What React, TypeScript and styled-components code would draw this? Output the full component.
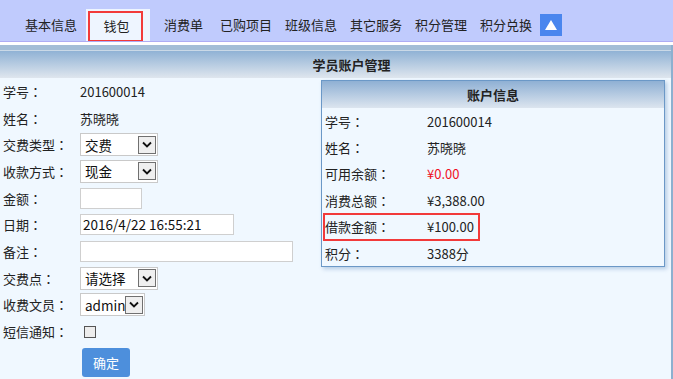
import React from 'react';
import styled, { createGlobalStyle } from 'styled-components';

const GlobalStyle = createGlobalStyle`
  body {
    margin: 0;
    background: #ffffff;
    font-family: "Noto Sans CJK SC", "Noto Sans", sans-serif;
    font-size: 13px;
    color: #222;
  }
`;

const Page = styled.div`
  width: 673px;
  height: 379px;
  overflow: hidden;
`;

const NavBar = styled.div`
  height: 41px;
  background: #c0cbfd;
  border-bottom: 1px solid #aeacf4;
  display: flex;
  align-items: flex-end;
  padding-left: 25px;
`;

const NavItem = styled.div<{ $gap?: number }>`
  height: 32px;
  line-height: 32px;
  margin-right: ${p => (p.$gap ?? 13)}px;
  white-space: nowrap;
  color: #222;
`;

const ActiveTab = styled.div`
  height: 32px;
  background: #eef5ff;
  padding: 0 7px 0 2px;
  margin: 0 14px 0 -4px;
  display: flex;
  align-items: flex-end;
`;

const ActiveInner = styled.div`
  width: 55px;
  height: 30px;
  box-sizing: border-box;
  border: 2px solid #f23a3a;
  border-bottom-width: 1px;
  text-align: center;
  line-height: 26px;
  padding-left: 2px;
`;

const UpButton = styled.div`
  width: 22px;
  height: 22px;
  background: #4a86ee;
  margin-bottom: 5px;
  display: flex;
  align-items: center;
  justify-content: center;
`;

const Panel = styled.div`
  margin-top: 3px;
  border-right: 2px solid #8db0cf;
`;

const PanelHeader = styled.div`
  height: 28px;
  border-top: 5px solid #a3bdd6;
  box-shadow: inset 0 1px 0 #cad9e7;
  background: linear-gradient(#8db0d4, #dfe6ee);
  font-weight: bold;
  line-height: 30px;
  text-align: center;
  padding-left: 32px;
`;

const PanelBody = styled.div`
  background: #f0f8ff;
  height: 301px;
  display: grid;
  grid-template-columns: 321px 344px;
  align-items: start;
`;

const Form = styled.div`
  display: flex;
  flex-direction: column;
`;

const FormRow = styled.div`
  height: 26.7px;
  display: grid;
  grid-template-columns: 80px 1fr;
  align-items: center;
`;

const Label = styled.span`
  padding-left: 3px;
  white-space: nowrap;
`;

const Colon = styled.span`
  font-family: "Noto Sans CJK JP", sans-serif;
`;

const Select = styled.div<{ $width: number }>`
  width: ${p => p.$width}px;
  height: 23px;
  box-sizing: border-box;
  border: 1px solid #c9c9c9;
  background: #fff;
  display: flex;
  align-items: center;
  justify-content: space-between;
  padding: 0 1px 0 4px;
  font-size: 13.5px;
  color: #111;
`;

const Arrow = styled.span`
  width: 18px;
  height: 18px;
  box-sizing: border-box;
  border: 1px solid #707070;
  background: #efefef;
  display: flex;
  align-items: center;
  justify-content: center;
`;

const TextBox = styled.div<{ $width: number }>`
  width: ${p => p.$width}px;
  height: 21px;
  box-sizing: border-box;
  border: 1px solid #cfcfcf;
  background: #fff;
  padding-left: 2px;
  line-height: 19px;
  font-size: 13.5px;
  color: #111;
`;

const CheckBox = styled.span`
  width: 12px;
  height: 12px;
  box-sizing: border-box;
  margin-left: 4px;
  border: 1px solid #555;
  background: #ededed;
`;

const SubmitButton = styled.button`
  margin: 3px 0 0 82px;
  width: 48px;
  height: 29px;
  border: none;
  border-radius: 3px;
  background: #4d8fdc;
  color: #fff;
  font-family: inherit;
  font-size: 13px;
  padding: 0;
`;

const Card = styled.div`
  margin-top: 2px;
  border: 1px solid #6b98c7;
  box-shadow: 2px 2px 4px rgba(110, 150, 195, 0.45);
  background: #f0f8ff;
`;

const CardHeader = styled.div`
  height: 27px;
  line-height: 27px;
  text-align: center;
  font-weight: bold;
  background: linear-gradient(#8fb0d4, #dce5ef);
`;

const InfoRow = styled.div<{ $marked?: boolean }>`
  position: relative;
  height: 26.4px;
  display: grid;
  grid-template-columns: 105px 1fr;
  align-items: center;
  ${p => p.$marked && `
    &::after {
      content: '';
      position: absolute;
      left: 1px;
      top: -1px;
      width: 157px;
      height: 28px;
      box-sizing: border-box;
      border: 2px solid #f23a3a;
    }
  `}
`;

const Value = styled.span<{ $red?: boolean }>`
  color: ${p => (p.$red ? '#f0101f' : '#222')};
`;

const Chevron = () => (
  <svg width="10" height="7" viewBox="0 0 10 7">
    <path d="M1 1.5 L5 5.5 L9 1.5" fill="none" stroke="#111" strokeWidth="1.8" />
  </svg>
);

const FieldLabel = ({ text }: { text: string }) => (
  <Label>{text}<Colon>：</Colon></Label>
);

const navItems = ['消费单', '已购项目', '班级信息', '其它服务', '积分管理', '积分兑换'];

const info: { label: string; value: string; red?: boolean; marked?: boolean }[] = [
  { label: '学号', value: '201600014' },
  { label: '姓名', value: '苏晓晓' },
  { label: '可用余额', value: '¥0.00', red: true },
  { label: '消费总额', value: '¥3,388.00' },
  { label: '借款金额', value: '¥100.00', marked: true },
  { label: '积分', value: '3388分' },
];

export default function App() {
  return (
    <Page>
      <GlobalStyle />
      <NavBar>
        <NavItem $gap={13}>基本信息</NavItem>
        <ActiveTab>
          <ActiveInner>钱包</ActiveInner>
        </ActiveTab>
        {navItems.map((n, i) => (
          <NavItem key={n} $gap={i === 0 ? 17 : i === navItems.length - 1 ? 8 : 13}>{n}</NavItem>
        ))}
        <UpButton>
          <svg width="12" height="10" viewBox="0 0 12 10">
            <path d="M6 0 L12 10 L0 10 Z" fill="#fff" />
          </svg>
        </UpButton>
      </NavBar>
      <Panel>
        <PanelHeader>学员账户管理</PanelHeader>
        <PanelBody>
          <Form>
            <FormRow><FieldLabel text="学号" /><span>201600014</span></FormRow>
            <FormRow><FieldLabel text="姓名" /><span>苏晓晓</span></FormRow>
            <FormRow>
              <FieldLabel text="交费类型" />
              <Select $width={78}>交费<Arrow><Chevron /></Arrow></Select>
            </FormRow>
            <FormRow>
              <FieldLabel text="收款方式" />
              <Select $width={78}>现金<Arrow><Chevron /></Arrow></Select>
            </FormRow>
            <FormRow><FieldLabel text="金额" /><TextBox $width={62} /></FormRow>
            <FormRow><FieldLabel text="日期" /><TextBox $width={154}>2016/4/22 16:55:21</TextBox></FormRow>
            <FormRow><FieldLabel text="备注" /><TextBox $width={213} /></FormRow>
            <FormRow>
              <FieldLabel text="交费点" />
              <Select $width={78}>请选择<Arrow><Chevron /></Arrow></Select>
            </FormRow>
            <FormRow>
              <FieldLabel text="收费文员" />
              <Select $width={65}>admin<Arrow><Chevron /></Arrow></Select>
            </FormRow>
            <FormRow><FieldLabel text="短信通知" /><CheckBox /></FormRow>
            <SubmitButton>确定</SubmitButton>
          </Form>
          <Card>
            <CardHeader>账户信息</CardHeader>
            {info.map(r => (
              <InfoRow key={r.label} $marked={r.marked}>
                <FieldLabel text={r.label} />
                <Value $red={r.red}>{r.value}</Value>
              </InfoRow>
            ))}
          </Card>
        </PanelBody>
      </Panel>
    </Page>
  );
}
